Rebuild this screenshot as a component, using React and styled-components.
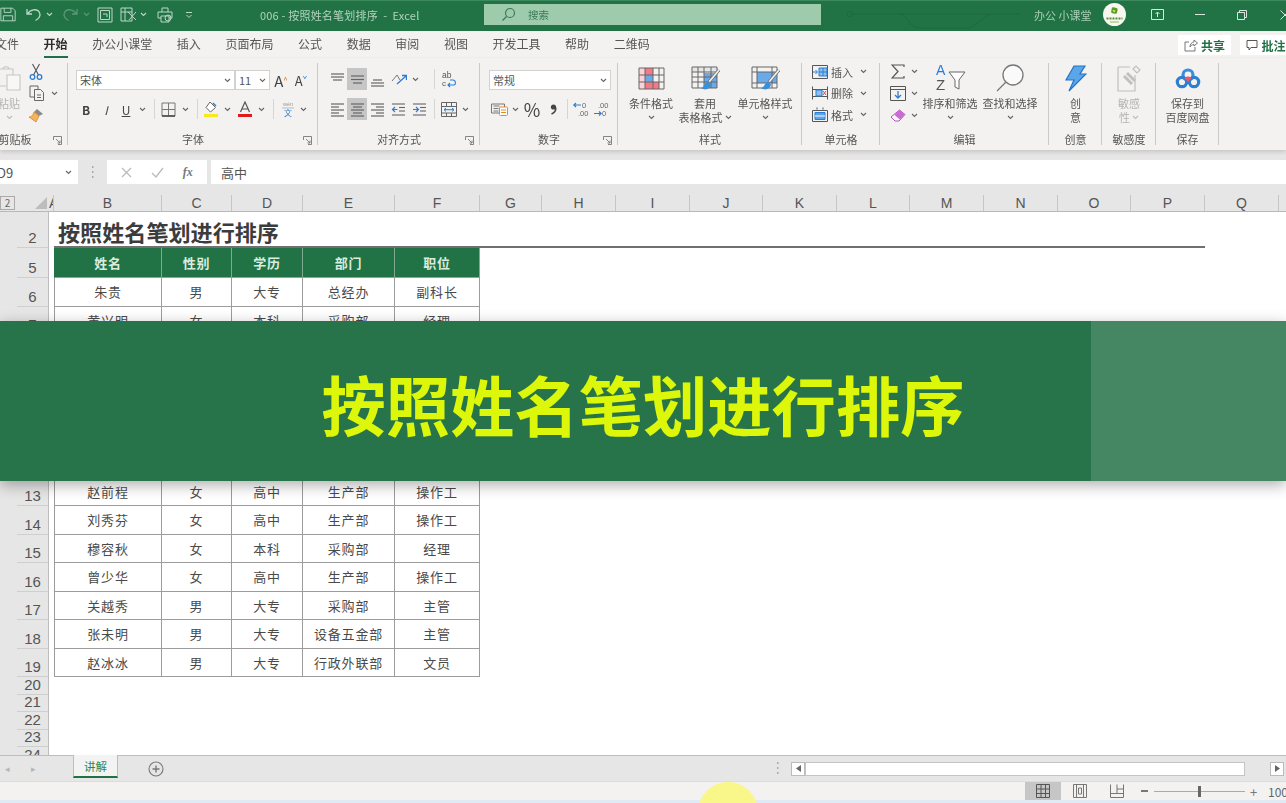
import React from 'react';
import styled, { createGlobalStyle } from 'styled-components';

const Global = createGlobalStyle`
  html, body {
    margin: 0;
    width: 1286px;
    height: 803px;
    overflow: hidden;
    background: #f3f2f1;
  }
  * { box-sizing: border-box; }
`;

const Page = styled.div`
  position: relative;
  width: 1286px;
  height: 803px;
  overflow: hidden;
  display: flex;
  flex-direction: column;
  font-family: "Noto Sans CJK SC", "Liberation Sans", sans-serif;
  color: #444;
  filter: blur(0.6px);
`;

/* title bar */
const TitleBar = styled.div`
  position: relative;
  flex: none;
  height: 31px;
  background: #217346;
  border-top: 1px solid #3d8a5e;
  padding-bottom: 3px;
  display: flex;
  align-items: center;
  color: #cfe3d6;
`;
const QuickSlot = styled.div`
  flex: none;
  width: ${p => p.$w}px;
  margin-left: ${p => p.$l || 0}px;
  display: flex;
  justify-content: center;
  align-items: center;
`;
const DocTitle = styled.div`
  flex: none;
  margin-left: 65px;
  width: 224px;
  font-size: 11px;
  letter-spacing: 0.2px;
  color: #b4d3bf;
  white-space: pre;
`;
const SearchBox = styled.div`
  flex: none;
  width: 337px;
  height: 21px;
  background: #9ecbab;
  display: flex;
  align-items: center;
  padding-left: 17px;
  gap: 12px;
  font-size: 10.5px;
  color: #3d7a58;
`;
const UserName = styled.div`
  flex: none;
  margin-left: 213px;
  width: 62px;
  font-size: 11px;
  color: #a9cdb7;
  white-space: pre;
`;
const Avatar = styled.div`
  flex: none;
  margin-left: 7px;
  width: 23px;
  height: 23px;
  border-radius: 50%;
  background: #f7f7f0;
  display: flex;
  align-items: center;
  justify-content: center;
`;
const WinButton = styled.div`
  flex: none;
  width: 43px;
  display: flex;
  justify-content: center;
  margin-left: ${p => p.$l || 0}px;
`;
const Traces = styled.svg`
  position: absolute;
  left: 840px;
  top: 0;
`;

/* tabs */
const TabBar = styled.div`
  position: relative;
  flex: none;
  height: 27px;
  background: #f3f2f1;
  display: flex;
  align-items: center;
  margin-left: -5px;
`;
const Tab = styled.div`
  flex: none;
  position: relative;
  margin-right: 24.6px;
  font-size: 12px;
  line-height: 25px;
  height: 27px;
  font-weight: ${p => (p.$active ? 700 : 400)};
  color: ${p => (p.$active ? '#2e2e2e' : '#555')};
  ${p => p.$active && `
    &::after {
      content: '';
      position: absolute;
      left: 0;
      right: 0;
      bottom: 0;
      height: 2px;
      background: #217346;
    }
  `}
`;
const TabActions = styled.div`
  position: absolute;
  left: 1183px;
  top: 4px;
  display: flex;
  gap: 9px;
`;
const ActionButton = styled.div`
  flex: none;
  width: ${p => p.$w}px;
  height: 20px;
  background: #fff;
  display: flex;
  align-items: center;
  justify-content: center;
  gap: 3px;
  font-size: 12px;
  font-weight: 700;
  color: ${p => p.$color};
`;

/* ribbon */
const Ribbon = styled.div`
  flex: none;
  height: 92px;
  background: #f3f2f1;
  display: flex;
  box-shadow: 0 2px 4px rgba(0, 0, 0, 0.14);
  position: relative;
  z-index: 1;
`;
const Group = styled.div`
  position: relative;
  flex: none;
  width: ${p => p.$w}px;
  height: 100%;
  display: flex;
  flex-direction: column;
  &::after {
    content: '';
    position: absolute;
    right: 0;
    top: 5px;
    bottom: 5px;
    width: 1px;
    background: #c9c9c9;
  }
`;
const GroupBody = styled.div`
  flex: none;
  height: 73px;
  display: flex;
  flex-direction: ${p => (p.$row ? 'row' : 'column')};
  padding-left: ${p => p.$pad || 0}px;
  padding-top: ${p => p.$top || 0}px;
`;
const GroupLabel = styled.div`
  flex: none;
  height: 16px;
  line-height: 16px;
  text-align: center;
  font-size: 11px;
  color: #555;
  margin-left: ${p => p.$l || 0}px;
  white-space: nowrap;
`;
const Launcher = styled.svg`
  position: absolute;
  right: 6px;
  bottom: 5px;
`;
const ToolRow = styled.div`
  flex: none;
  height: ${p => p.$h || 29}px;
  display: flex;
  align-items: center;
`;
const Slot = styled.div`
  flex: none;
  width: ${p => p.$w}px;
  height: 100%;
  margin-left: ${p => p.$l || 0}px;
  display: flex;
  align-items: center;
  justify-content: center;
  font-size: ${p => p.$fs || 12}px;
  font-weight: ${p => p.$fw || 400};
  font-style: ${p => (p.$it ? 'italic' : 'normal')};
  color: ${p => p.$color || '#444'};
  background: ${p => (p.$on ? '#c6c6c6' : 'transparent')};
  svg { flex: none; }
`;
const Sep = styled.div`
  flex: none;
  width: 1px;
  height: 20px;
  background: #d5d5d5;
  margin: 0 ${p => p.$r || 0}px 0 ${p => p.$l || 0}px;
`;
const SelectBox = styled.div`
  flex: none;
  width: ${p => p.$w}px;
  height: 20px;
  background: #fff;
  border: 1px solid #d2d2d2;
  display: flex;
  align-items: center;
  justify-content: space-between;
  padding: 0 3px;
  font-size: 11px;
  color: #555;
`;
const GrowMark = styled.sup`
  font-size: 8px;
  line-height: 8px;
  color: ${p => p.$color};
`;
const Underlined = styled.span`
  text-decoration: underline;
`;
const BigButton = styled.div`
  flex: none;
  width: ${p => p.$w}px;
  display: flex;
  flex-direction: column;
  align-items: center;
  color: ${p => (p.$muted ? '#b4b4b4' : '#555')};
`;
const BigIcon = styled.div`
  flex: none;
  height: 36px;
  display: flex;
  align-items: center;
  justify-content: center;
`;
const BigLine = styled.div`
  flex: none;
  height: 14px;
  line-height: 14px;
  font-size: 11px;
  white-space: nowrap;
  display: flex;
  align-items: center;
  gap: 2px;
`;
const CellTool = styled.div`
  flex: none;
  height: 21.5px;
  display: flex;
  align-items: center;
  padding-left: 10px;
  font-size: 11px;
  color: #555;
  gap: 3px;
  svg { flex: none; }
`;
const CellToolLabel = styled.span`
  width: 26px;
  white-space: nowrap;
`;

/* formula bar */
const FormulaBar = styled.div`
  flex: none;
  height: 35px;
  padding-top: 10px;
  padding-bottom: 1px;
  background: #e6e6e6;
  display: flex;
`;
const NameBox = styled.div`
  flex: none;
  width: 78px;
  background: #fff;
  display: flex;
  align-items: center;
  justify-content: space-between;
  padding: 0 6px 0 0;
  font-size: 13px;
  color: #555;
`;
const NameValue = styled.span`
  margin-left: -3px;
`;
const FormulaDots = styled.div`
  flex: none;
  width: 29px;
  display: flex;
  align-items: center;
  justify-content: center;
`;
const FormulaButtons = styled.div`
  flex: none;
  width: 100px;
  background: #fff;
  display: flex;
  align-items: center;
  justify-content: space-around;
  padding: 0 5px;
  color: #777;
`;
const FxMark = styled.i`
  font-size: 12px;
  font-weight: 700;
  font-family: "Liberation Serif", serif;
`;
const FormulaInput = styled.div`
  flex: 1;
  margin-left: 4px;
  background: #fff;
  display: flex;
  align-items: center;
  padding-left: 10px;
  font-size: 13px;
  color: #555;
`;

/* grid */
const ColumnHeads = styled.div`
  flex: none;
  height: 27px;
  background: #e6e6e6;
  padding-top: 10px;
  display: flex;
  border-bottom: 1px solid #b8b8b8;
`;
const Corner = styled.div`
  flex: none;
  width: 49px;
  display: flex;
  align-items: center;
  justify-content: space-between;
  padding-right: 2px;
`;
const OutlineButton = styled.div`
  width: 15px;
  height: 14px;
  border: 1px solid #aaa;
  font-size: 10px;
  line-height: 12px;
  text-align: center;
  color: #666;
`;
const ColumnHead = styled.div`
  flex: none;
  width: ${p => p.$w}px;
  height: 100%;
  border-right: 1px solid #c6c6c6;
  text-align: center;
  font-size: 14px;
  line-height: 17px;
  color: #555;
  font-family: "Liberation Sans", sans-serif;
  overflow: hidden;
`;
const Sheet = styled.div`
  flex: none;
  height: 543px;
  background: #fff;
  overflow: hidden;
  display: flex;
  flex-direction: column;
`;
const SheetRow = styled.div`
  flex: none;
  height: ${p => p.$h}px;
  display: flex;
`;
const RowNumber = styled.div`
  flex: none;
  width: 49px;
  background: linear-gradient(#cfcfcf, #cfcfcf) right bottom / 31px 1px no-repeat #e6e6e6;
  display: flex;
  align-items: flex-end;
  justify-content: center;
  padding-left: 17px;
  font-size: 15px;
  line-height: 20px;
  color: #555;
  font-family: "Liberation Sans", sans-serif;
  border-right: 1px solid #bdbdbd;
`;
const RowCells = styled.div`
  flex: 1;
  display: flex;
  padding-left: 5px;
`;
const SheetTitle = styled.div`
  flex: none;
  width: 1151px;
  border-bottom: 2px solid #707070;
  font-size: 22.1px;
  font-weight: 700;
  line-height: 38px;
  height: 36px;
  padding-left: 4px;
  color: #3c3c3c;
  white-space: nowrap;
`;
const Cell = styled.div`
  flex: none;
  width: ${p => p.$w}px;
  display: flex;
  align-items: center;
  justify-content: center;
  font-size: 13px;
  font-weight: ${p => (p.$head ? 700 : 400)};
  color: ${p => (p.$head ? '#d9ecdf' : '#4a4a4a')};
  background: ${p => (p.$head ? '#217346' : '#fff')};
  border-right: 1px solid ${p => (p.$head ? '#7fa892' : '#9c9c9c')};
  border-bottom: 1px solid #9c9c9c;
  ${p => p.$first && `border-left: 1px solid ${p.$head ? '#217346' : '#9c9c9c'};`}
  letter-spacing: 0.8px;
`;

/* sheet tabs and status */
const SheetTabs = styled.div`
  flex: none;
  height: 26px;
  background: #e6e6e6;
  border-top: 1px solid #bdbdbd;
  display: flex;
`;
const TabNav = styled.div`
  flex: none;
  width: 73px;
  display: flex;
  align-items: center;
  gap: 21px;
  padding-left: 5px;
  font-size: 9px;
  color: #b5b5b5;
`;
const SheetTab = styled.div`
  flex: none;
  width: 45px;
  height: 23px;
  margin-top: -1px;
  background: #f3f3f3;
  border: 1px solid #bdbdbd;
  border-top: none;
  border-bottom: 2px solid #217346;
  text-align: center;
  font-size: 11.5px;
  line-height: 22px;
  color: #2f8a5b;
`;
const AddSheet = styled.div`
  flex: none;
  margin-left: 30px;
  width: 16px;
  display: flex;
  align-items: center;
`;
const TabSplitter = styled.div`
  flex: none;
  margin-left: 612px;
  width: 13px;
  display: flex;
  align-items: center;
`;
const ScrollBar = styled.div`
  flex: 1;
  display: flex;
  align-items: center;
  padding-left: 2px;
`;
const ScrollArrow = styled.div`
  flex: none;
  width: 14px;
  height: 14px;
  background: #fff;
  border: 1px solid #bbb;
  display: flex;
  align-items: center;
  justify-content: center;
  margin-left: ${p => p.$l || 0}px;
`;
const ScrollThumb = styled.div`
  flex: none;
  width: 440px;
  height: 14px;
  background: #fff;
  border: 1px solid #c4c4c4;
`;
const StatusBar = styled.div`
  flex: none;
  height: 19px;
  background: #f3f2f1;
  display: flex;
  align-items: center;
  padding-left: 1025px;
  border-top: 1px solid #dcdcdc;
`;
const ViewButton = styled.div`
  flex: none;
  width: ${p => p.$w || 36}px;
  height: 100%;
  display: flex;
  align-items: center;
  justify-content: center;
  background: ${p => (p.$on ? '#c6c6c6' : 'transparent')};
`;
const ZoomMinus = styled.div`
  flex: none;
  width: 7px;
  height: 1.5px;
  background: #777;
  margin: 0 6px 0 6px;
`;
const ZoomTrack = styled.div`
  position: relative;
  flex: none;
  width: 91px;
  height: 1px;
  background: #aaa;
`;
const ZoomThumb = styled.div`
  position: absolute;
  left: 44px;
  top: -5px;
  width: 3px;
  height: 11px;
  background: #666;
`;
const ZoomPlus = styled.div`
  flex: none;
  margin-left: 5px;
  font-size: 13px;
  width: 12px;
  color: #777;
`;
const ZoomValue = styled.div`
  flex: none;
  margin-left: 6px;
  font-size: 12px;
  color: #666;
  white-space: nowrap;
`;
const BottomStrip = styled.div`
  flex: none;
  height: 3px;
  background: #dfeaf4;
`;

/* overlays */
const Banner = styled.div`
  position: absolute;
  left: 0;
  right: 0;
  top: 321px;
  height: 160px;
  padding-top: 3px;
  background: #27744a;
  box-shadow: 0 4px 14px rgba(0, 0, 0, 0.32);
  display: flex;
  align-items: center;
  justify-content: center;
  font-size: 64.3px;
  font-weight: 700;
  color: #dcf70a;
  white-space: nowrap;
  z-index: 5;
`;
const BannerShade = styled.div`
  position: absolute;
  left: 1091px;
  right: 0;
  top: 0;
  bottom: 0;
  background: rgba(255, 255, 255, 0.14);
`;
const CursorSpot = styled.div`
  position: absolute;
  left: 698px;
  top: 782px;
  width: 60px;
  height: 60px;
  border-radius: 50%;
  background: #f9f68a;
  z-index: 4;
`;

/* icons */
const Chevron = ({ c = '#666' }) => (
  <svg width="7" height="5" viewBox="0 0 7 5"><path d="M1 1l2.5 2.5L6 1" fill="none" stroke={c} strokeWidth="1.1" /></svg>
);
const Lines = ({ ys, spans }) => (
  <svg width="15" height="15" viewBox="0 0 15 15">
    {ys.map((y, i) => <path key={y} d={`M${spans[i][0]} ${y}H${spans[i][1]}`} stroke="#666" strokeWidth="1.2" />)}
  </svg>
);
const AlignTop = () => <Lines ys={[2, 5, 8]} spans={[[1, 14], [1, 14], [3, 12]]} />;
const AlignMid = () => <Lines ys={[4, 7.5, 11]} spans={[[1, 14], [1, 14], [3, 12]]} />;
const AlignBot = () => <Lines ys={[8, 11, 14]} spans={[[3, 12], [1, 14], [1, 14]]} />;
const AlignLeft = () => <Lines ys={[2, 5, 8, 11, 14]} spans={[[1, 14], [1, 9], [1, 14], [1, 9], [1, 14]]} />;
const AlignCenter = () => <Lines ys={[2, 5, 8, 11, 14]} spans={[[1, 14], [3, 12], [1, 14], [3, 12], [1, 14]]} />;
const AlignRight = () => <Lines ys={[2, 5, 8, 11, 14]} spans={[[1, 14], [6, 14], [1, 14], [6, 14], [1, 14]]} />;
const Indent = ({ flip }) => (
  <svg width="15" height="15" viewBox="0 0 15 15">
    {[2, 5.5, 9, 13].map(y => <path key={y} d={`M${y === 2 || y === 13 ? 1 : 8} ${y}H14`} stroke="#666" strokeWidth="1.1" />)}
    <path d={flip ? 'M1 7.5h5M4 5l2.5 2.5L4 10' : 'M6.5 7.5h-5M4 5L1.5 7.5 4 10'} fill="none" stroke="#2b7cd3" strokeWidth="1.2" />
  </svg>
);
const SaveIcon = () => (
  <svg width="19" height="17" viewBox="0 0 19 17" fill="none" stroke="#b9d8c5" strokeWidth="1.1">
    <path d="M1 1h14l3 3v12H1zM5 1v5h8V1M4 16V10h11v6" />
  </svg>
);
const UndoIcon = ({ c = '#b9d8c5' }) => (
  <svg width="17" height="15" viewBox="0 0 17 15" fill="none" stroke={c} strokeWidth="1.3">
    <path d="M2 2v5h5M2.5 7C5 2.5 12 1 14.5 5.5c1.5 3-0.5 6.5-4 8" />
  </svg>
);
const RedoIcon = () => (
  <svg width="17" height="15" viewBox="0 0 17 15" fill="none" stroke="#5c9878" strokeWidth="1.3">
    <path d="M15 2v5h-5M14.500 7C12 2.500 5 1 2.500 5.500c-1.500 3 .5 6.500 4 8" />
  </svg>
);
const FrameIcon = () => (
  <svg width="16" height="16" viewBox="0 0 16 16" fill="none" stroke="#b9d8c5" strokeWidth="1">
    <path d="M1 1h14v14H1zM3.500 3.500h9v9h-9zM6 7h4v3" />
  </svg>
);
const GridIcon = () => (
  <svg width="17" height="15" viewBox="0 0 17 15" fill="none" stroke="#b9d8c5" strokeWidth="1">
    <path d="M1 1h11v13H1zM1 5h11M5 1v13M8 5l8 8M16 5l-7 8" />
  </svg>
);
const PrintIcon = () => (
  <svg width="16" height="16" viewBox="0 0 16 16" fill="none" stroke="#b9d8c5" strokeWidth="1">
    <path d="M5 5V1h6v4M1 5h14v6h-3M1 5v6h3M4 9h8v6H4z" /><circle cx="11" cy="11" r="3" />
  </svg>
);
const CustomizeIcon = () => (
  <svg width="8" height="8" viewBox="0 0 8 8" fill="none" stroke="#b9d8c5"><path d="M1 1.500h6M1.500 4l2.500 2.500L6.500 4" /></svg>
);
const SearchGlass = () => (
  <svg width="15" height="15" viewBox="0 0 15 15" fill="none" stroke="#3d7a58" strokeWidth="1.2"><circle cx="9" cy="6" r="4.500" /><path d="M5.500 9.500L1.500 13.500" /></svg>
);
const LauncherIcon = () => (
  <Launcher width="9" height="9" viewBox="0 0 9 9" fill="none" stroke="#777" strokeWidth="0.9">
    <path d="M0.500 4V.5h8V8.500H5M3 3l4 4M7 4.500V7H4.500" />
  </Launcher>
);
const LogoIcon = () => (
  <svg width="21" height="21" viewBox="0 0 21 21">
    <rect x="7.500" y="3.500" width="6" height="6" rx="1.500" fill="#5d9a2e" transform="rotate(10 10 6)" />
    <path d="M9 6.500l2 1" stroke="#f4e04a" strokeWidth="1.500" />
    <path d="M2.500 14.500h16" stroke="#4f8f35" strokeWidth="2" strokeDasharray="2 1" />
    <path d="M6 18h9" stroke="#8dbb5b" strokeWidth="1" />
  </svg>
);
const DisplayIcon = () => (
  <svg width="13" height="11" viewBox="0 0 13 11" fill="none" stroke="#d8e8de"><path d="M.5.500h12v10H.5zM6.500 8V3.500M4.500 5l2-2 2 2" /></svg>
);
const RestoreIcon = () => (
  <svg width="10" height="10" viewBox="0 0 10 10" fill="none" stroke="#d8e8de"><path d="M.5 2.500h7v7h-7zM2.500 2.500V.5h7v7h-2" /></svg>
);
const CloseIcon = () => (
  <svg width="10" height="10" viewBox="0 0 10 10" fill="none" stroke="#d8e8de"><path d="M.5.5l9 9M9.500.5l-9 9" /></svg>
);
const ShareIcon = () => (
  <svg width="14" height="13" viewBox="0 0 14 13" fill="none" stroke="#777"><path d="M5 3H1v9h10V8M6 8c0-3 2-5 4-5V1l3.500 3L10 7V5.500C8 5.500 7 6.500 6 8z" /></svg>
);
const CommentIcon = () => (
  <svg width="12" height="12" viewBox="0 0 12 12" fill="none" stroke="#555"><path d="M1 1.500h10v7H5L3 11V8.500H1z" /></svg>
);
const PasteIcon = () => (
  <svg width="24" height="28" viewBox="0 0 24 28" fill="none" stroke="#c6c6c6" strokeWidth="1.100">
    <path d="M2 5h14v6M6 5c0-3 6-3 6 0M2 5v17h7" /><path d="M10 11h13v15H10z" fill="#f7f7f7" />
  </svg>
);
const CutIcon = () => (
  <svg width="14" height="17" viewBox="0 0 14 17" fill="none">
    <path d="M3.500 1l6 11M10.500 1l-6 11" stroke="#555" strokeWidth="1.100" />
    <circle cx="3.500" cy="14" r="2.300" stroke="#2b7cd3" strokeWidth="1.300" />
    <circle cx="10.500" cy="14" r="2.300" stroke="#2b7cd3" strokeWidth="1.300" />
  </svg>
);
const CopyIcon = () => (
  <svg width="16" height="16" viewBox="0 0 16 16" fill="none" stroke="#666">
    <path d="M1 1h8v3M1 1v11h4" /><path d="M5.500 4.500h6l3 3v8h-9zM8 10h4M8 12.500h4" />
  </svg>
);
const PainterIcon = () => (
  <svg width="16" height="15" viewBox="0 0 16 15">
    <path d="M9 1l6 5-4 2-5-4z" fill="#8a8a8a" />
    <path d="M6 4l5 4-3 6-7-5c3 0 4-2 5-5z" fill="#f4b35f" stroke="#d88a24" strokeWidth="0.800" />
  </svg>
);
const BorderIcon = () => (
  <svg width="15" height="15" viewBox="0 0 15 15" fill="none" stroke="#777"><path d="M1 1h13v13H1zM7.500 1v13M1 7.500h13" /><path d="M1 14h13" stroke="#444" strokeWidth="1.500" /></svg>
);
const FillIcon = () => (
  <svg width="16" height="16" viewBox="0 0 16 16">
    <path d="M7 1l5.500 5.500L7.500 11 3 6.500z" fill="#fff" stroke="#666" />
    <path d="M10 2l3 3" stroke="#2b7cd3" strokeWidth="1.500" />
    <rect x="1" y="13" width="14" height="3" fill="#f6ea1a" />
  </svg>
);
const FontColorIcon = () => (
  <svg width="16" height="16" viewBox="0 0 16 16">
    <path d="M3.500 11L8 1l4.500 10M5.200 8h5.600" fill="none" stroke="#555" strokeWidth="1.200" />
    <rect x="1" y="13" width="14" height="3" fill="#e01b1b" />
  </svg>
);
const WenIcon = () => (
  <svg width="18" height="18" viewBox="0 0 18 18">
    <text x="9" y="6" textAnchor="middle" fontSize="5.500" fill="#999" fontFamily="Liberation Sans">wén</text>
    <path d="M3 8h12" stroke="#bbb" />
    <text x="9" y="16" textAnchor="middle" fontSize="8" fill="#2b7cd3" fontFamily="Noto Sans CJK SC">文</text>
  </svg>
);
const OrientIcon = () => (
  <svg width="16" height="15" viewBox="0 0 16 15" fill="none">
    <path d="M1 9L6 3l3 5" stroke="#777" />
    <path d="M6 12L15 4M11 3.500h4.500V8" stroke="#2b7cd3" strokeWidth="1.300" />
  </svg>
);
const WrapIcon = () => (
  <svg width="16" height="17" viewBox="0 0 16 17" fill="none">
    <text x="1" y="7" fontSize="8.500" fill="#555" fontFamily="Liberation Sans">ab</text>
    <text x="1" y="15" fontSize="8" fill="#555" fontFamily="Liberation Sans">c</text>
    <path d="M7 14h6c2 0 2-5-1-5H9M9 12l-2 2 2 2" stroke="#2b7cd3" strokeWidth="1.100" />
  </svg>
);
const MergeIcon = () => (
  <svg width="16" height="15" viewBox="0 0 16 15" fill="none" stroke="#666">
    <path d="M.5.500h15v14H.5zM.5 4.500h15M.5 11h15M5.500.5v4M10.500.5v4M5.500 11v3.500M10.500 11v3.500" />
    <path d="M3 7.700h10M5 6L3 7.700 5 9.500M11 6l2 1.700L11 9.500" stroke="#2b7cd3" />
  </svg>
);
const CurrencyIcon = () => (
  <svg width="17" height="14" viewBox="0 0 17 14" fill="none">
    <path d="M.5 2h13v9H.5zM2.500 4h6M2.500 6.500h5M2.500 9h5" stroke="#777" />
    <rect x="8.500" y="5" width="8" height="8.500" rx="1" fill="#fff" stroke="#e68a1e" />
    <path d="M10 8h5M10 10.500h5" stroke="#e68a1e" />
  </svg>
);
const CommaIcon = () => (
  <svg width="7" height="11" viewBox="0 0 7 11">
    <circle cx="3.500" cy="3" r="2.600" fill="#444" />
    <path d="M5.800 3.500C6 6.500 4 9 1.500 10" fill="none" stroke="#444" strokeWidth="1.500" />
  </svg>
);
const DecimalIcon = ({ more }) => (
  <svg width="18" height="18" viewBox="0 0 18 18">
    <text x={more ? 5 : 9} y="8" fontSize="7.500" fill="#666" fontFamily="Liberation Sans">{more ? '.00' : '0'}</text>
    <text x={more ? 9 : 5} y="16" fontSize="7.500" fill="#666" fontFamily="Liberation Sans">{more ? '0' : '.00'}</text>
    <path d={more ? 'M1 13.500h7M6 11.500l2.200 2-2.200 2' : 'M8 5H1M3 3L.8 5 3 7'} fill="none" stroke="#2b7cd3" strokeWidth="1.100" />
  </svg>
);
const CondIcon = () => (
  <svg width="27" height="23" viewBox="0 0 27 23">
    <path d="M7 1h8v7H7z" fill="#f27a88" /><path d="M7 8h8v7H7z" fill="#6aaae8" /><path d="M7 15h14v7H7z" fill="#f27a88" /><path d="M1 1h6v21H1z" fill="#f9d3d8" />
    <path d="M1 1h25v21H1zM1 8h25M1 15h25M7 1v21M15 1v21M21 1v21" fill="none" stroke="#666" strokeWidth="1" />
  </svg>
);
const Brush = () => (
  <>
    <path d="M28 4L18 16" stroke="#777" strokeWidth="3.200" />
    <path d="M28 4L18 16" stroke="#f3f2f1" strokeWidth="1.600" />
    <path d="M18 15c-3 1-4 3-5 5-1 1-2 2-3 2 4 3 9 1 10-3z" fill="#3a8fd9" />
  </>
);
const TableIcon = () => (
  <svg width="29" height="25" viewBox="0 0 29 25">
    <path d="M1 1h25v5H1z" fill="#e6e6e6" /><path d="M13 7h13v15H13z" fill="#6aaae8" />
    <path d="M1 1h25v21H1zM1 6h25M1 11h25M1 16h25M7 1v21M13 1v21M20 1v21" fill="none" stroke="#666" strokeWidth="1" />
    <Brush />
  </svg>
);
const CellStyleIcon = () => (
  <svg width="29" height="25" viewBox="0 0 29 25">
    <path d="M6 6h20v11H6z" fill="#6aaae8" />
    <path d="M1 1h25v21H1zM1 6h25M1 17h25M6 1v21M21 1v21" fill="none" stroke="#666" strokeWidth="1" />
    <Brush />
  </svg>
);
const CellInsertIcon = () => (
  <svg width="16" height="14" viewBox="0 0 16 14" fill="none" stroke="#555">
    <path d="M.5.500h15v13H.5z" /><path d="M7 3h8v8H7z" fill="#8cc0ee" stroke="#2b7cd3" /><path d="M7 7h8M11 3v8" stroke="#2b7cd3" /><path d="M1 7h4M3.500 5L5.500 7l-2 2" stroke="#2b7cd3" />
  </svg>
);
const CellDeleteIcon = () => (
  <svg width="16" height="14" viewBox="0 0 16 14" fill="none" stroke="#555">
    <path d="M.5 3.500h15M.5 10.500h15M.5.500v13M15.500.5v13" /><path d="M4 4h6v6H4z" fill="#8cc0ee" stroke="#2b7cd3" /><path d="M11 5l3 4M14 5l-3 4" stroke="#e2454f" />
  </svg>
);
const CellFormatIcon = () => (
  <svg width="16" height="15" viewBox="0 0 16 15" fill="none" stroke="#555">
    <path d="M.5 3.500h15v11H.5z" /><path d="M3 5.500h10v7H3z" fill="#5aa5e6" stroke="#2b7cd3" /><path d="M3 9h10" stroke="#fff" /><path d="M5 .5v2M11 .5v2" />
  </svg>
);
const SigmaIcon = () => (
  <svg width="14" height="15" viewBox="0 0 14 15" fill="none" stroke="#555" strokeWidth="1.200"><path d="M13 3V1H1l6 6.500L1 14h12v-2" /></svg>
);
const FillDownIcon = () => (
  <svg width="16" height="15" viewBox="0 0 16 15" fill="none">
    <path d="M.5.500h15v14H.5z" stroke="#555" /><path d="M.5 3.500h15" stroke="#555" />
    <path d="M8 5v7M5 9l3 3 3-3" stroke="#2b7cd3" strokeWidth="1.300" />
  </svg>
);
const EraserIcon = () => (
  <svg width="16" height="13" viewBox="0 0 16 13">
    <path d="M9.500 1L15 5.500 9 12H5L1 8z" fill="#fff" stroke="#b44fc0" />
    <path d="M9.500 1L15 5.500 10 10.500 4.500 6z" fill="#c86cd2" />
  </svg>
);
const SortIcon = () => (
  <svg width="31" height="32" viewBox="0 0 31 32">
    <text x="1" y="13" fontSize="14" fill="#2b7cd3" fontFamily="Liberation Sans">A</text>
    <text x="1" y="28" fontSize="15" fill="#555" fontFamily="Liberation Sans">Z</text>
    <path d="M14 10h16l-6 8v9l-4-2v-7z" fill="#fff" stroke="#666" />
  </svg>
);
const FindIcon = () => (
  <svg width="30" height="28" viewBox="0 0 30 28" fill="none" stroke="#777" strokeWidth="1.300">
    <circle cx="18" cy="11" r="10" fill="#fafafa" /><path d="M11 18L2 27" />
  </svg>
);
const IdeaIcon = () => (
  <svg width="22" height="27" viewBox="0 0 22 27"><path d="M9 1h11l-5 8h6L4 26l5-11H1z" fill="#5ba6e8" stroke="#2473c7" strokeWidth="1.200" /></svg>
);
const SensitivityIcon = () => (
  <svg width="26" height="28" viewBox="0 0 26 28" fill="none" stroke="#c0c0c0" strokeWidth="1.200">
    <path d="M2 3h12M2 3v24h17V11" /><path d="M8 12l8 8M11 9l8 8" strokeWidth="3" /><path d="M17 5l3-3 4 4-3 3z" />
  </svg>
);
const CloudIcon = () => (
  <svg width="26" height="21" viewBox="0 0 26 21" fill="none">
    <circle cx="13" cy="7" r="5" stroke="#3a8fd9" strokeWidth="3.200" />
    <circle cx="7" cy="14" r="4.700" stroke="#2f7fd0" strokeWidth="3.200" />
    <circle cx="19" cy="14" r="4.700" stroke="#2f7fd0" strokeWidth="3.200" />
    <path d="M9.500 10c2-2 5-2 7 0l-3.500 4z" fill="#f0566a" />
  </svg>
);
const AddIcon = () => (
  <svg width="16" height="16" viewBox="0 0 16 16" fill="none" stroke="#777" strokeWidth="1.100">
    <circle cx="8" cy="8" r="7" /><path d="M4.500 8h7M8 4.500v7" strokeWidth="1.400" />
  </svg>
);
const VDots = () => (
  <svg width="3" height="13" viewBox="0 0 3 13" fill="#aaa"><rect x="1" y="0" width="1.500" height="2" /><rect x="1" y="5" width="1.500" height="2" /><rect x="1" y="10" width="1.500" height="2" /></svg>
);
const ArrowTri = ({ left }) => (
  <svg width="5" height="7" viewBox="0 0 5 7" fill="#666"><path d={left ? 'M5 0v7L0 3.500z' : 'M0 0v7l5-3.500z'} /></svg>
);
const NormalView = () => (
  <svg width="14" height="14" viewBox="0 0 14 14" fill="none" stroke="#555"><path d="M.5.500h13v13H.5zM.5 5h13M.5 9.500h13M5 .5v13M9.500.5v13" /></svg>
);
const LayoutView = () => (
  <svg width="14" height="14" viewBox="0 0 14 14" fill="none" stroke="#777"><path d="M.5.500h13v13H.5zM3.500.5v13M10.500.5v13M5.500 4h3v6h-3z" /></svg>
);
const BreakView = () => (
  <svg width="14" height="14" viewBox="0 0 14 14" fill="none" stroke="#777"><path d="M.5.500v13h13V.5M.5 9.500h13M7 .5v9M13.500 5H7" /></svg>
);
const CornerMark = () => (
  <svg width="12" height="12" viewBox="0 0 12 12"><path d="M12 0v12H0z" fill="#bdbdbd" /></svg>
);

const cols = [
  ['A', 5], ['B', 108], ['C', 70], ['D', 71], ['E', 92], ['F', 85], ['G', 62], ['H', 74], ['I', 74], ['J', 73],
  ['K', 74], ['L', 73], ['M', 74], ['N', 74], ['O', 73], ['P', 74], ['Q', 74],
];
const tableCols = [108, 70, 71, 92, 85];
const heads = ['姓名', '性别', '学历', '部门', '职位'];
const rows = [
  [6, '朱贵', '男', '大专', '总经办', '副科长'],
  [7, '黄兴明', '女', '本科', '采购部', '经理'],
  [8], [9], [10], [11], [12],
  [13, '赵前程', '女', '高中', '生产部', '操作工'],
  [14, '刘秀芬', '女', '高中', '生产部', '操作工'],
  [15, '穆容秋', '女', '本科', '采购部', '经理'],
  [16, '曾少华', '女', '高中', '生产部', '操作工'],
  [17, '关越秀', '男', '大专', '采购部', '主管'],
  [18, '张未明', '男', '大专', '设备五金部', '主管'],
  [19, '赵冰冰', '男', '大专', '行政外联部', '文员'],
];
const tabs = ['文件', '开始', '办公小课堂', '插入', '页面布局', '公式', '数据', '审阅', '视图', '开发工具', '帮助', '二维码'];

export default function App() {
  return (
    <Page>
      <Global />
      <TitleBar>
        <Traces width="200" height="30" viewBox="0 0 200 30" fill="none" stroke="#1c6a3e">
          <path d="M10 13h170M60 13c8 0 8 14 20 14h50l20-14" />
          <circle cx="10" cy="13" r="3" />
        </Traces>
        <QuickSlot $w={16}><SaveIcon /></QuickSlot>
        <QuickSlot $w={20} $l={7}><UndoIcon /></QuickSlot>
        <QuickSlot $w={12}><Chevron c="#b9d8c5" /></QuickSlot>
        <QuickSlot $w={20} $l={5}><RedoIcon /></QuickSlot>
        <QuickSlot $w={12}><Chevron c="#5c9878" /></QuickSlot>
        <QuickSlot $w={20} $l={3}><FrameIcon /></QuickSlot>
        <QuickSlot $w={20} $l={3}><GridIcon /></QuickSlot>
        <QuickSlot $w={10}><Chevron c="#b9d8c5" /></QuickSlot>
        <QuickSlot $w={20} $l={7}><PrintIcon /></QuickSlot>
        <QuickSlot $w={12} $l={8}><CustomizeIcon /></QuickSlot>
        <DocTitle>{'006 - 按照姓名笔划排序  -  Excel'}</DocTitle>
        <SearchBox><SearchGlass />搜索</SearchBox>
        <UserName>{'办公 小课堂'}</UserName>
        <Avatar><LogoIcon /></Avatar>
        <WinButton $l={10}><DisplayIcon /></WinButton>
        <WinButton $l={-1}><svg width="10" height="2"><rect width="10" height="1" fill="#d8e8de" /></svg></WinButton>
        <WinButton $l={-1}><RestoreIcon /></WinButton>
        <WinButton><CloseIcon /></WinButton>
      </TitleBar>

      <TabBar>
        {tabs.map(t => <Tab key={t} $active={t === '开始'}>{t}</Tab>)}
        <TabActions>
          <ActionButton $w={53} $color="#217346"><ShareIcon />共享</ActionButton>
          <ActionButton $w={52} $color="#217346"><CommentIcon />批注</ActionButton>
        </TabActions>
      </TabBar>

      <Ribbon>
        <Group $w={68}>
          <GroupBody $row $top={2}>
            <BigButton $w={18} $muted>
              <BigIcon><PasteIcon /></BigIcon>
              <BigLine>粘贴</BigLine>
              <BigLine><Chevron c="#bbb" /></BigLine>
            </BigButton>
            <div>
              <ToolRow $h={22}><Slot $w={28} $l={4}><CutIcon /></Slot></ToolRow>
              <ToolRow $h={22}><Slot $w={24} $l={7}><CopyIcon /></Slot><Slot $w={10}><Chevron /></Slot></ToolRow>
              <ToolRow $h={22}><Slot $w={28} $l={4}><PainterIcon /></Slot></ToolRow>
            </div>
          </GroupBody>
          <GroupLabel $l={-38}>剪贴板</GroupLabel>
          <LauncherIcon />
        </Group>

        <Group $w={250}>
          <GroupBody $pad={8} $top={11}>
            <ToolRow $h={22}>
              <SelectBox $w={159}>宋体<Chevron /></SelectBox>
              <SelectBox $w={35}>11<Chevron /></SelectBox>
              <Slot $w={20} $fs={15} $l={1}>A<GrowMark $color="#c77a1e">^</GrowMark></Slot>
              <Slot $w={20} $fs={13}>A<GrowMark $color="#2b7cd3">ˇ</GrowMark></Slot>
            </ToolRow>
            <ToolRow $h={36}>
              <Slot $w={20} $fw={700}>B</Slot>
              <Slot $w={20} $it>I</Slot>
              <Slot $w={20}><Underlined>U</Underlined></Slot>
              <Slot $w={12}><Chevron /></Slot>
              <Sep $l={6} $r={5} />
              <Slot $w={16}><BorderIcon /></Slot>
              <Slot $w={18}><Chevron /></Slot>
              <Sep $l={3} $r={2} />
              <Slot $w={22}><FillIcon /></Slot>
              <Slot $w={10}><Chevron /></Slot>
              <Slot $w={26}><FontColorIcon /></Slot>
              <Slot $w={6}><Chevron /></Slot>
              <Sep $l={9} $r={8} />
              <Slot $w={12}><WenIcon /></Slot>
              <Slot $w={18}><Chevron /></Slot>
            </ToolRow>
          </GroupBody>
          <GroupLabel>字体</GroupLabel>
          <LauncherIcon />
        </Group>

        <Group $w={162}>
          <GroupBody $pad={9} $top={10}>
            <ToolRow $h={22}>
              <Slot $w={20}><AlignTop /></Slot>
              <Slot $w={20} $on><AlignMid /></Slot>
              <Slot $w={20}><AlignBot /></Slot>
              <Slot $w={24}><OrientIcon /></Slot>
              <Slot $w={8}><Chevron /></Slot>
              <Sep $l={15} $r={6} />
              <Slot $w={16}><WrapIcon /></Slot>
            </ToolRow>
            <ToolRow $h={8} />
            <ToolRow $h={22}>
              <Slot $w={20}><AlignLeft /></Slot>
              <Slot $w={20} $on><AlignCenter /></Slot>
              <Slot $w={20}><AlignRight /></Slot>
              <Slot $w={22}><Indent /></Slot>
              <Slot $w={20}><Indent flip /></Slot>
              <Sep $l={5} $r={6} />
              <Slot $w={16}><MergeIcon /></Slot>
              <Slot $w={16}><Chevron /></Slot>
            </ToolRow>
          </GroupBody>
          <GroupLabel>对齐方式</GroupLabel>
          <LauncherIcon />
        </Group>

        <Group $w={138}>
          <GroupBody $pad={9} $top={11}>
            <ToolRow $h={22}><SelectBox $w={122}>常规<Chevron /></SelectBox></ToolRow>
            <ToolRow $h={36}>
              <Slot $w={20}><CurrencyIcon /></Slot>
              <Slot $w={12}><Chevron /></Slot>
              <Slot $w={22} $fs={18}>%</Slot>
              <Slot $w={20}><CommaIcon /></Slot>
              <Sep $l={4} $r={4} />
              <Slot $w={20}><DecimalIcon /></Slot>
              <Slot $w={20}><DecimalIcon more /></Slot>
            </ToolRow>
          </GroupBody>
          <GroupLabel>数字</GroupLabel>
          <LauncherIcon />
        </Group>

        <Group $w={184}>
          <GroupBody $row $pad={4} $top={2}>
            <BigButton $w={58}>
              <BigIcon><CondIcon /></BigIcon>
              <BigLine>条件格式</BigLine>
              <BigLine><Chevron /></BigLine>
            </BigButton>
            <BigButton $w={50}>
              <BigIcon><TableIcon /></BigIcon>
              <BigLine>套用</BigLine>
              <BigLine>表格格式 <Chevron /></BigLine>
            </BigButton>
            <BigButton $w={70}>
              <BigIcon><CellStyleIcon /></BigIcon>
              <BigLine>单元格样式</BigLine>
              <BigLine><Chevron /></BigLine>
            </BigButton>
          </GroupBody>
          <GroupLabel>样式</GroupLabel>
        </Group>

        <Group $w={78}>
          <GroupBody $top={3}>
            <CellTool><CellInsertIcon /><CellToolLabel>插入</CellToolLabel> <Chevron /></CellTool>
            <CellTool><CellDeleteIcon /><CellToolLabel>删除</CellToolLabel> <Chevron /></CellTool>
            <CellTool><CellFormatIcon /><CellToolLabel>格式</CellToolLabel><Chevron /></CellTool>
          </GroupBody>
          <GroupLabel>单元格</GroupLabel>
        </Group>

        <Group $w={169}>
          <GroupBody $row $pad={8} $top={2}>
            <div>
              <ToolRow $h={22}><Slot $w={20}><SigmaIcon /></Slot><Slot $w={12}><Chevron /></Slot></ToolRow>
              <ToolRow $h={22}><Slot $w={20}><FillDownIcon /></Slot><Slot $w={12}><Chevron /></Slot></ToolRow>
              <ToolRow $h={22}><Slot $w={20}><EraserIcon /></Slot><Slot $w={12}><Chevron /></Slot></ToolRow>
            </div>
            <BigButton $w={60}>
              <BigIcon><SortIcon /></BigIcon>
              <BigLine>排序和筛选</BigLine>
              <BigLine><Chevron /></BigLine>
            </BigButton>
            <BigButton $w={60}>
              <BigIcon><FindIcon /></BigIcon>
              <BigLine>查找和选择</BigLine>
              <BigLine><Chevron /></BigLine>
            </BigButton>
          </GroupBody>
          <GroupLabel>编辑</GroupLabel>
        </Group>

        <Group $w={53}>
          <GroupBody $row $top={2}>
            <BigButton $w={53}>
              <BigIcon><IdeaIcon /></BigIcon>
              <BigLine>创</BigLine>
              <BigLine>意</BigLine>
            </BigButton>
          </GroupBody>
          <GroupLabel>创意</GroupLabel>
        </Group>

        <Group $w={54}>
          <GroupBody $row $top={2}>
            <BigButton $w={54} $muted>
              <BigIcon><SensitivityIcon /></BigIcon>
              <BigLine>敏感</BigLine>
              <BigLine>性 <Chevron c="#bbb" /></BigLine>
            </BigButton>
          </GroupBody>
          <GroupLabel>敏感度</GroupLabel>
        </Group>

        <Group $w={63}>
          <GroupBody $row $top={2}>
            <BigButton $w={63}>
              <BigIcon><CloudIcon /></BigIcon>
              <BigLine>保存到</BigLine>
              <BigLine>百度网盘</BigLine>
            </BigButton>
          </GroupBody>
          <GroupLabel>保存</GroupLabel>
        </Group>
      </Ribbon>

      <FormulaBar>
        <NameBox><NameValue>D9</NameValue><Chevron /></NameBox>
        <FormulaDots><VDots /></FormulaDots>
        <FormulaButtons>
          <svg width="11" height="11" viewBox="0 0 11 11" fill="none" stroke="#bbb" strokeWidth="1.300"><path d="M1 1l9 9M10 1l-9 9" /></svg>
          <svg width="13" height="11" viewBox="0 0 13 11" fill="none" stroke="#bbb" strokeWidth="1.300"><path d="M1 6l4 4 7-9" /></svg>
          <FxMark>fx</FxMark>
        </FormulaButtons>
        <FormulaInput>高中</FormulaInput>
      </FormulaBar>

      <ColumnHeads>
        <Corner><OutlineButton>2</OutlineButton><CornerMark /></Corner>
        {cols.map(([name, w]) => <ColumnHead key={name} $w={w}>{name}</ColumnHead>)}
      </ColumnHeads>

      <Sheet>
        <SheetRow $h={36}>
          <RowNumber>2</RowNumber>
          <RowCells><SheetTitle>按照姓名笔划进行排序</SheetTitle></RowCells>
        </SheetRow>
        <SheetRow $h={30}>
          <RowNumber>5</RowNumber>
          <RowCells>
            {heads.map((h, i) => <Cell key={h} $head $first={i === 0} $w={tableCols[i]}>{h}</Cell>)}
          </RowCells>
        </SheetRow>
        {rows.map(([n, ...vals]) => (
          <SheetRow key={n} $h={28.5}>
            <RowNumber>{n}</RowNumber>
            <RowCells>
              {tableCols.map((w, i) => <Cell key={i} $first={i === 0} $w={w}>{vals[i]}</Cell>)}
            </RowCells>
          </SheetRow>
        ))}
        {[20, 21, 22, 23, 24].map(n => (
          <SheetRow key={n} $h={17.5}>
            <RowNumber>{n}</RowNumber>
            <RowCells />
          </SheetRow>
        ))}
      </Sheet>

      <SheetTabs>
        <TabNav><span>◂</span><span>▸</span></TabNav>
        <SheetTab>讲解</SheetTab>
        <AddSheet><AddIcon /></AddSheet>
        <TabSplitter><VDots /></TabSplitter>
        <ScrollBar>
          <ScrollArrow><ArrowTri left /></ScrollArrow>
          <ScrollThumb />
          <ScrollArrow $l={25}><ArrowTri /></ScrollArrow>
        </ScrollBar>
      </SheetTabs>

      <StatusBar>
        <ViewButton $on><NormalView /></ViewButton>
        <ViewButton $w={38}><LayoutView /></ViewButton>
        <ViewButton $w={36}><BreakView /></ViewButton>
        <ZoomMinus />
        <ZoomTrack><ZoomThumb /></ZoomTrack>
        <ZoomPlus>+</ZoomPlus>
        <ZoomValue>100%</ZoomValue>
      </StatusBar>
      <BottomStrip />

      <CursorSpot />
      <Banner>
        按照姓名笔划进行排序
        <BannerShade />
      </Banner>
    </Page>
  );
}
